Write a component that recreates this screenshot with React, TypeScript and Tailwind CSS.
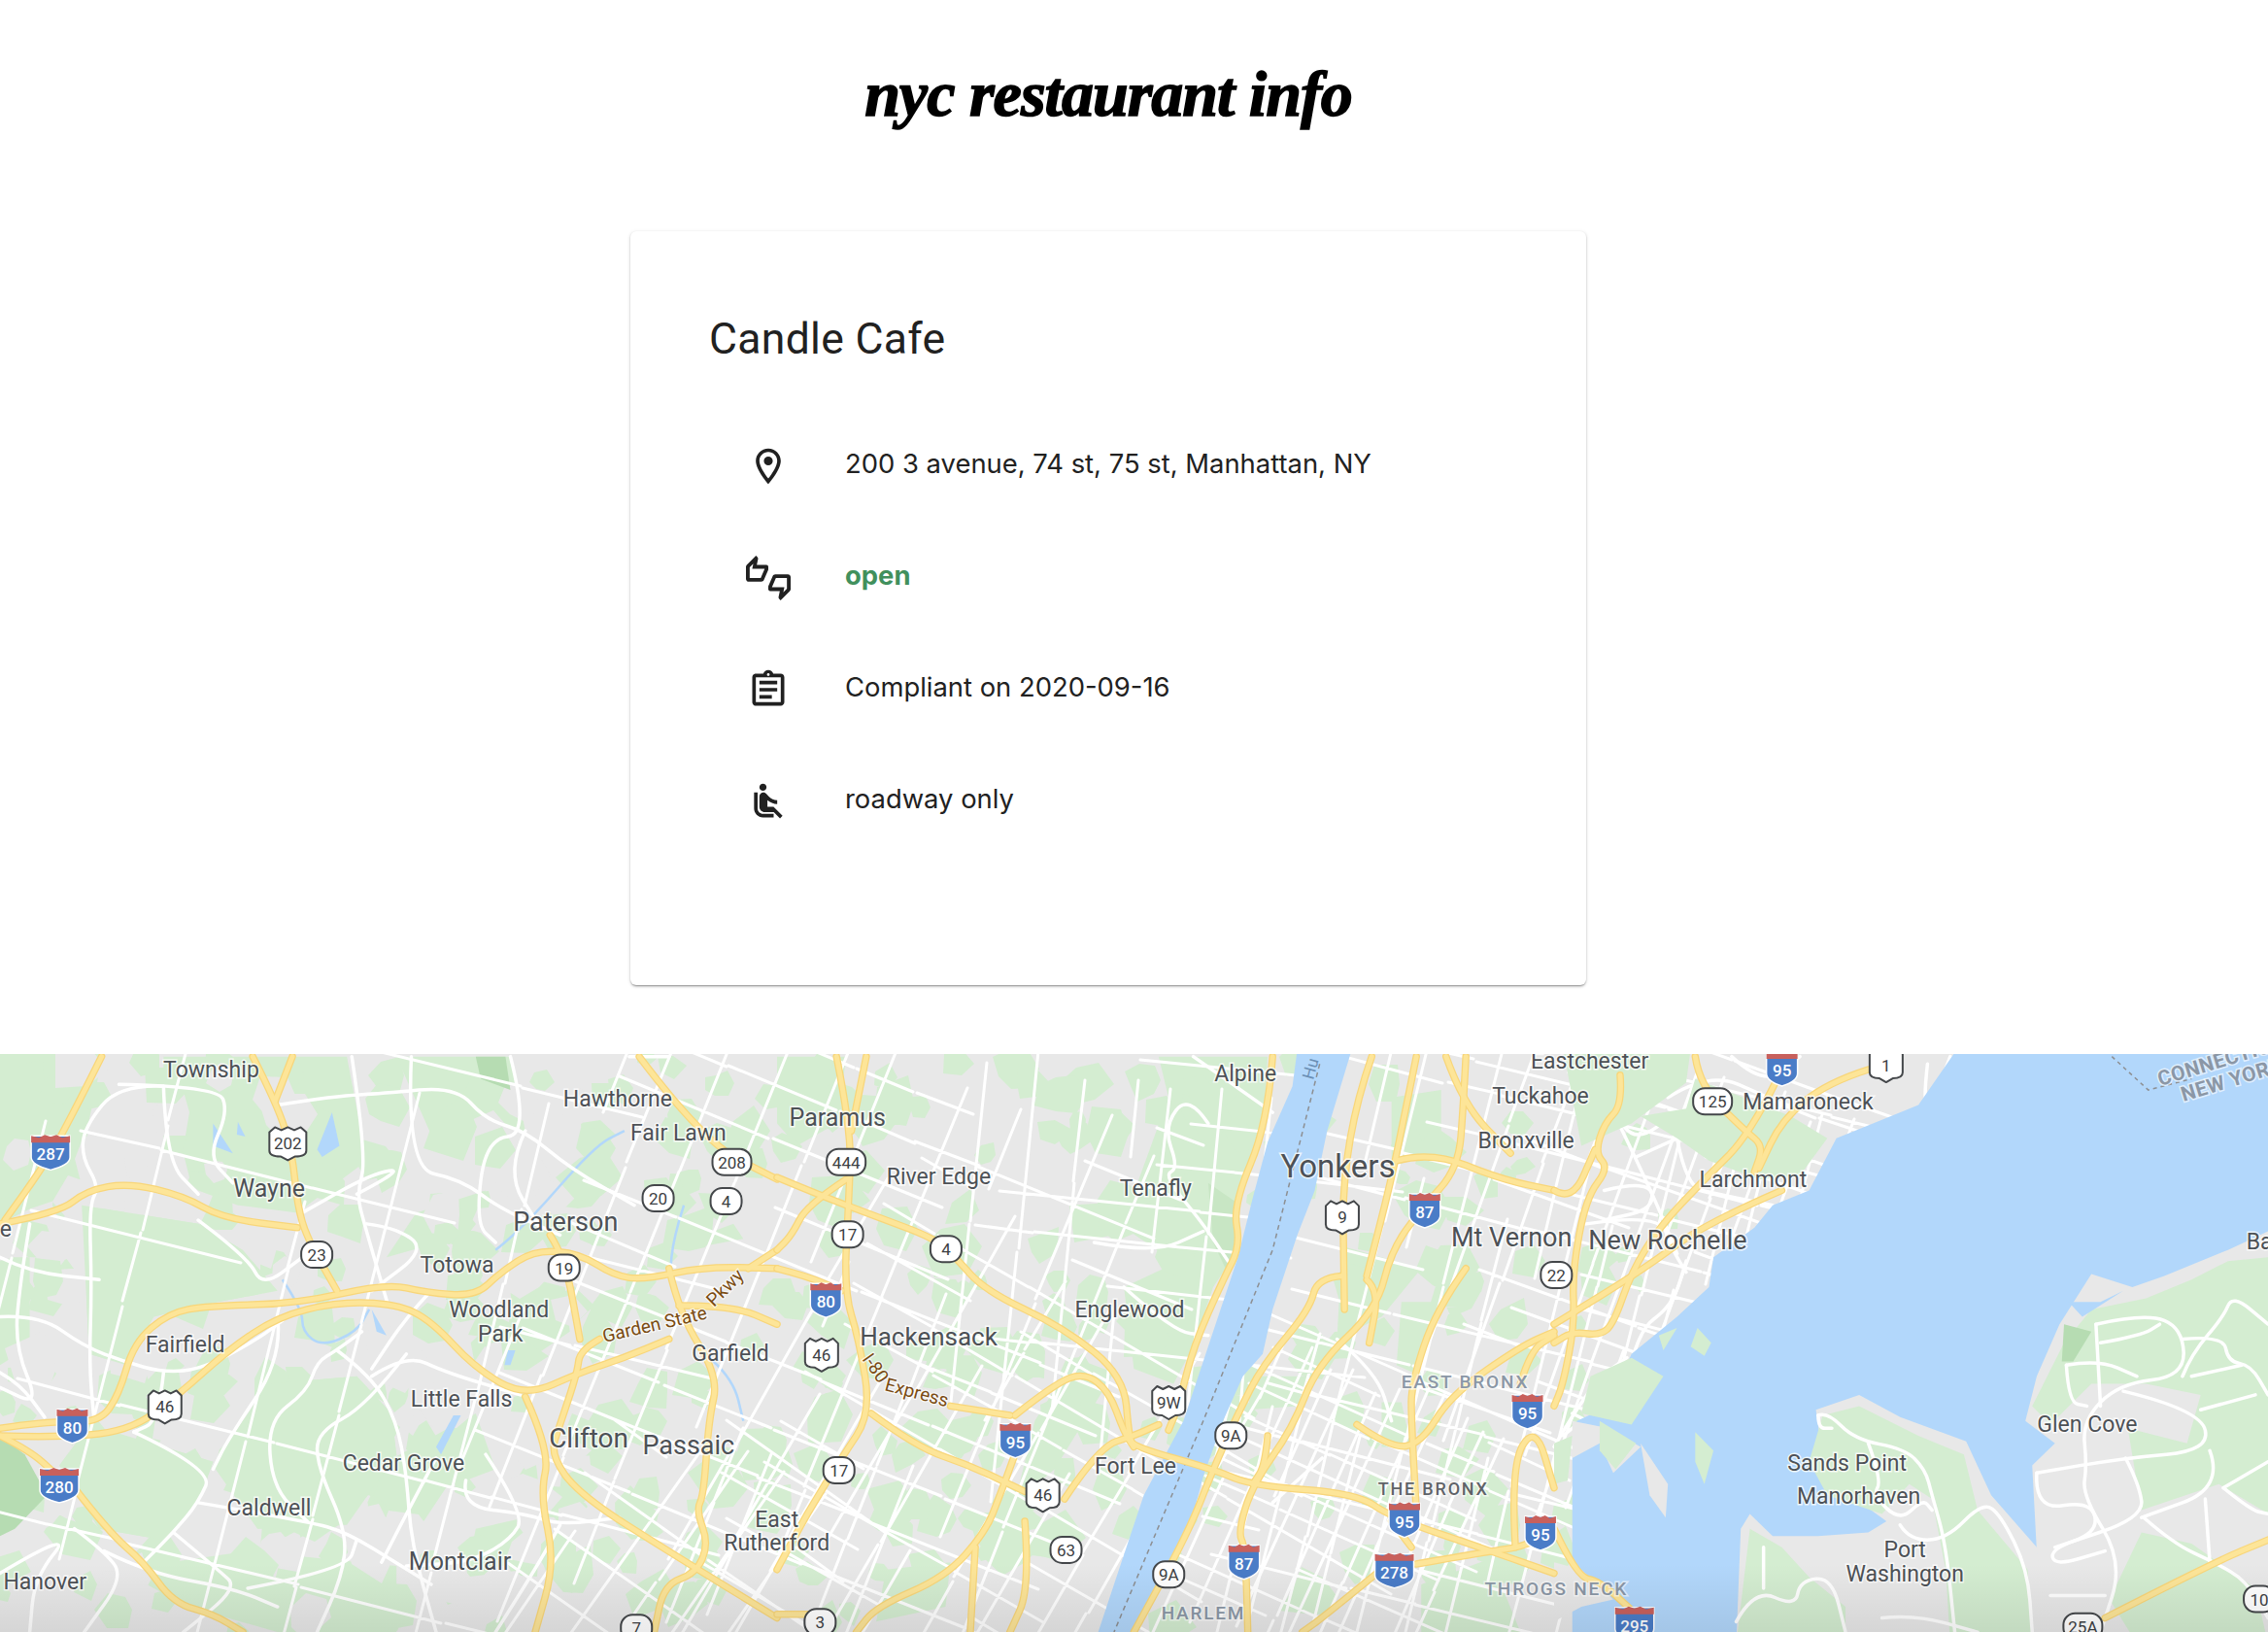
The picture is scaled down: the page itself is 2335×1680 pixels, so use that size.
import React from 'react'

// --- map drawing helpers ---
type Pts = string

const T1 = 'matrix(0.5102 0 0 0.3827 0 1080)'
const T2 = 'matrix(0.5102 0 0 0.3827 800 1080)'
const T3 = 'matrix(0.4688 0 0 0.3827 1600 1080)'

function smooth(p: Pts) {
  const a = p.trim().split(/\s+/).map((s) => s.split(',').map(Number))
  let d = `M${a[0][0]},${a[0][1]}`
  for (let i = 1; i < a.length - 1; i++) {
    const mx = (a[i][0] + a[i + 1][0]) / 2
    const my = (a[i][1] + a[i + 1][1]) / 2
    d += `Q${a[i][0]},${a[i][1]} ${mx},${my}`
  }
  const l = a[a.length - 1]
  return d + `L${l[0]},${l[1]}`
}

function lcg(seed: number) {
  let s = seed
  return () => {
    s = (s * 16807) % 2147483647
    return (s & 0xffff) / 0xffff
  }
}

function grid(x: number, y: number, w: number, h: number, deg: number, step: number, seed: number) {
  const rnd = lcg(seed)
  const rad = (deg * Math.PI) / 180
  const c = Math.cos(rad)
  const n = Math.sin(rad)
  const cx = x + w / 2
  const cy = y + h / 2
  const pt = (u: number, v: number) =>
    `${Math.round(cx + u * c - v * n)},${Math.round(cy + u * n + v * c)}`
  let d = ''
  const R = Math.max(w, h) / 2
  for (let u = -R; u <= R; u += step * (0.8 + rnd() * 0.7)) {
    let v = -R + rnd() * 40
    while (v < R) {
      const len = 60 + rnd() * 200
      if (rnd() > 0.2) d += `M${pt(u, v)}L${pt(u + rnd() * 4 - 2, v + len)}`
      v += len + rnd() * 6
    }
  }
  for (let v = -R; v <= R; v += step * (0.8 + rnd() * 0.9)) {
    let u = -R + rnd() * 40
    while (u < R) {
      const len = 50 + rnd() * 160
      if (rnd() > 0.22) d += `M${pt(u, v)}L${pt(u + len, v + rnd() * 4 - 2)}`
      u += len + rnd() * 6
    }
  }
  return d
}

// scattered irregular patches, the tree cover of the base map
function blotches(x: number, y: number, w: number, h: number, count: number, min: number, max: number, seed: number) {
  const rnd = lcg(seed)
  let d = ''
  for (let i = 0; i < count; i++) {
    const cx = x + rnd() * w
    const cy = y + rnd() * h
    const r = min + rnd() * (max - min)
    const sides = 5 + Math.floor(rnd() * 3)
    for (let k = 0; k < sides; k++) {
      const a = (k / sides) * Math.PI * 2
      const rr = r * (0.55 + rnd() * 0.6)
      d += `${k ? 'L' : 'M'}${Math.round(cx + Math.cos(a) * rr)},${Math.round(cy + Math.sin(a) * rr)}`
    }
    d += 'Z'
  }
  return d
}

const GREEN = '#d4edd1'
const GREEN2 = '#c8e6c4'
const GREEN3 = '#b6dcb2'
const LAND = '#e8e8e8'
const WATER = '#b2d7fb'

// traced in tile coordinates, see T1/T2/T3
const greens1: Pts[] = [
  '0,0 210,0 180,190 165,330 170,380 60,430 0,470',
  '330,20 700,20 740,300 600,440 480,420 400,380 330,300',
  '165,420 400,470 490,540 560,650 400,690 310,720 255,850 180,820',
  '0,560 60,560 60,800 0,850',
  '180,1010 430,1110 400,1220 330,1320 200,1290 120,1120',
  '540,900 720,880 790,980 800,1090 700,1280 520,1290 430,1120',
  '780,1110 960,980 1000,1130 900,1180 830,1320 720,1280',
  '240,1400 500,1350 800,1390 800,1568 560,1568 380,1500',
  '1080,620 1140,640 1150,760 1040,860 960,860 950,790',
  '800,20 1030,20 1060,220 950,200 880,260',
  '840,440 980,380 940,500 780,560',
  '1420,500 1480,470 1500,510 1420,530',
  '960,1290 1060,1260 1060,1400 940,1420',
]
const solid1: Pts[] = [
  '165,420 400,470 490,540 560,650 400,690 310,720 255,850 180,820',
  '180,1010 430,1110 400,1220 330,1320 200,1290 120,1120',
  '540,900 720,880 790,980 800,1090 700,1280 520,1290 430,1120',
]
const dark1: Pts[] = ['0,1040 50,1090 95,1200 30,1290 0,1310', '960,20 1020,20 1030,110 970,80']
const greens2: Pts[] = [
  '770,20 990,20 980,240 925,410 935,530 880,640 800,570 700,480 730,350 790,130',
  '700,640 860,540 880,640 840,800 800,900 720,860',
  '1140,530 1300,590 1220,720 1130,780',
  '1240,130 1340,110 1340,260 1240,320',
  '960,880 1070,880 1050,960 950,970',
  '0,20 140,20 120,200 40,260 0,200',
  '590,420 700,410 680,500 600,520',
  '520,1000 600,830 680,870 560,1130 480,1220',
  '1220,950 1260,950 1280,1070 1220,1070',
  '1260,680 1340,680 1300,880 1250,850',
  '220,1400 350,1380 340,1500 200,1540',
  '1300,1440 1440,1370 1500,1568 1300,1568',
]
const parks2: Pts[] = ['870,360 925,410 935,530 905,590 880,520']

const whites1: Pts[] = [
  '330,100 240,95 170,210 165,290 200,370 180,420 185,640 180,850 190,1000',
  '240,95 440,100 460,170 420,290 470,360',
  '330,100 335,300 400,390',
  '0,720 80,715 170,800 250,840 330,870 410,860 520,780 570,730',
  '60,470 40,630 30,800 80,960 0,910',
  '400,460 500,560 530,640 610,560',
  '560,150 680,125 770,120 920,100 980,190 1060,220 1150,320 1280,420',
  '710,20 740,290 720,390 735,470 790,720 770,630',
  '830,20 820,320 930,350 1010,430 1130,500',
  '740,470 800,480 860,540 750,650',
  '720,390 820,320 750,335 610,440',
  '1030,20 1070,230 980,240 960,470 1000,520',
  '270,1030 430,1130 400,1220 350,1300 290,1380',
  '400,1220 620,1270 700,1300 810,1390 870,1440',
  '560,720 570,830 460,1050 430,1130',
  '730,760 680,810 640,840 620,920 540,1000 550,1180 620,1270',
  '680,810 750,880 800,1000 820,1140 830,1330 880,1568',
  '750,880 820,820 900,870 1050,930',
  '820,820 740,960 640,1030 640,1120 700,1300 690,1420 640,1568',
  '980,1090 1060,1250 1030,1320 950,1380 820,1390',
  '940,1160 930,1230 1060,1250 1130,1280 1250,1260',
  '150,1290 210,1350 250,1420 170,1568',
  '0,1410 150,1290 70,1420 60,1568',
  '210,1350 300,1410 470,1450 560,1500',
  '350,1300 440,1400 480,1450 370,1568',
  '1270,20 1350,20',
  '1000,1568 1080,1400 1130,1280',
  '880,1100 820,1250 770,1380',
  '0,870 40,900 90,990',
  '500,1450 700,1400 720,1320',
  '0,560 60,600 200,620',
  '330,870 320,1000 270,1030',
  '1060,220 1020,330 1090,480',
  '870,650 820,720 750,860',
]
const whites2: Pts[] = [
  '840,20 1000,170',
  '870,200 830,120 780,210 810,320 780,340 860,470 910,570',
  '640,520 760,550 860,490',
  '700,640 800,760 870,770',
  '1130,780 1210,870 1240,1000',
  '1000,1220 1100,1100',
]
const whites3: Pts[] = [
  '270,240 290,370 360,390 480,420',
  '340,200 370,300 310,370',
  '130,170 210,370 270,550',
  '110,380 210,350 220,430 110,460',
  '70,470 230,440 260,540 290,600',
  '160,900 180,760 260,690 290,570',
  '40,980 170,1060 190,1080 250,1250',
  '0,1070 80,900 160,830',
  '250,130 340,60 470,130',
  '370,110 270,170 180,250 130,170',
  '20,1040 60,1000',
  '270,240 180,290',
  '820,40 810,150 830,150 870,20',
  '390,20 460,100 540,20',
]
const whitesIsle: Pts[] = [
  '580,985 600,975 660,1050 770,1075 815,1130 830,1200 860,1330 880,1568',
  '580,985 580,1020 610,1020',
  '690,1060 720,1160 700,1200 760,1270 810,1210 830,1240',
  '760,1280 780,1320 860,1320 940,1220 980,1250 1040,1400 1050,1568',
  '400,1540 440,1450 530,1500 540,1430 610,1420 640,1568',
  '460,1340 460,1450',
  '720,1530 790,1520 930,1568',
  '1190,740 1300,710 1380,750 1385,880 1240,900 1160,1000 1170,1120 1160,1200 1250,1380 1200,1568',
  '1190,740 1200,960',
  '1200,790 1290,770 1330,740',
  '1125,850 1195,835 1280,880',
  '1125,850 1130,950 1170,960',
  '1380,880 1400,820 1470,720 1490,660 1568,740',
  '1380,780 1470,770 1480,840 1530,850 1568,930',
  '1400,880 1510,850',
  '1250,920 1420,970 1440,1080 1250,1100 1060,1140',
  '1420,970 1540,930',
  '1255,1100 1285,1170 1295,1260 1100,1340',
  '1060,1140 1055,1240 1180,1215 1195,1300 1090,1345 1100,1390 1210,1350',
  '1295,1260 1360,1330 1450,1380 1520,1430 1568,1530',
  '1440,1080 1470,1180 1290,1260',
  '1470,1180 1568,1110',
  '1430,1210 1440,1380',
  '1090,1470 1210,1470',
  '1470,1180 1530,1240 1568,1250',
]

const hw1: Pts[] = [
  '205,20 130,220 80,330 10,460',
  '0,470 120,440 175,380 260,360 370,395 450,455 600,480',
  '510,20 560,150 590,280 600,420 620,510 680,650',
  '590,20 555,140',
  '0,1020 100,1000 200,1005 240,930 270,790 340,710 420,690 600,685 780,630 860,655 960,665 1010,600 1080,540 1170,550 1240,610 1300,620 1420,585 1568,590',
  '0,1040 100,1045 260,1030 360,930 460,810 560,720 680,680 800,685 870,730 960,860 1060,935 1170,870 1260,830 1350,780',
  '1060,935 1110,1080 1090,1200 1120,1380 1080,1568',
  '1210,780 1170,810 1165,870 1130,1010 1110,1090 1170,1200 1360,1360 1568,1530',
  '1110,500 1140,560 1170,780',
  '0,1040 60,1080 110,1140',
  '150,1180 220,1300 290,1380 350,1490 430,1520 490,1568',
  '1350,590 1370,710 1450,880 1430,1000 1420,1200 1405,1240 1430,1330 1405,1410 1340,1440 1320,1568',
  '1370,690 1480,690 1568,740',
  '1290,20 1420,250 1568,350',
  '1510,590 1568,540',
]
const hw2: Pts[] = [
  '120,20 150,220 145,400 135,650 165,780 190,980 130,1100 60,1250 0,1400',
  '180,20 150,220',
  '0,345 90,395 200,450 320,510 360,560 420,650 580,750 700,880 710,1040 720,1070 880,1130 960,1175 1170,1195 1240,1260 1440,1350 1568,1410',
  '140,350 60,420 30,500 0,540',
  '0,590 60,610 130,650',
  '190,980 280,1070 390,1120 500,1190',
  '350,960 470,985',
  '480,985 560,900 620,870 670,920 700,1030 720,1070',
  '480,1090 450,1200 420,1300 340,1420 200,1500 160,1568',
  '400,1340 390,1568',
  '500,1270 510,1450 470,1568',
  '580,1210 650,1070 720,1040 770,1010',
  '0,1520 70,1520',
  '1000,20 990,200 920,420 935,530 900,620 840,800 810,960 790,1025',
  '1200,20 1140,250 1145,700',
  '1290,20 1270,150 1240,350 1190,610',
  '1250,300 1320,275 1460,350 1568,380',
  '1390,20 1385,150 1375,320 1300,430 1240,540 1210,700 1090,850 1040,1020 960,1170 930,1300 945,1340 950,1568',
  '1140,610 1090,615 1075,700 980,850 930,980 880,1130 830,1300 720,1568',
  '1190,620 1215,650 1195,790',
  '1350,20 1385,150 1480,280',
  '1390,590 1330,700 1280,900 1280,1000 1290,1240',
  '1170,1010 1240,1075 1300,1060 1360,930 1500,800 1568,760',
  '1240,1270 1280,1340',
  '1210,1410 1100,1530 1060,1568',
  '1290,1385 1440,1350 1500,1340 1568,1300',
  '1490,1340 1480,1120 1530,1010 1568,1180',
  '990,1040 985,1120 960,1170',
  '1500,900 1520,810 1568,770',
]
const hw3: Pts[] = [
  '310,20 320,100 420,220 460,260 440,330',
  '145,70 150,150 110,200 90,280 120,320 70,400 40,600 45,740 20,900 0,960',
  '490,80 430,230 330,350 230,480 170,600 130,740 100,770 40,760 0,790',
  '690,55 600,90 500,190 450,320',
  '500,380 330,470 200,590 0,740',
  '0,380 40,410 90,270',
  '0,1290 50,1420 100,1430 180,1520',
  '1210,1530 1450,1380 1568,1320',
]

type Lb = [string, number, number, number?, string?]
// [text, x, y] on the shrunk scale of the reference, sized by the 4th value
const labels: Lb[] = [
  ['Township', 146, 739], ['Hawthorne', 427, 759], ['Fair Lawn', 469, 783], ['Paramus', 579, 772, 25],
  ['Alpine', 861, 742], ['Eastchester', 1099, 733], ['Tuckahoe', 1065, 757], ['Mamaroneck', 1250, 761],
  ['Bronxville', 1055, 788], ['Wayne', 186, 821, 25], ['River Edge', 649, 813], ['Tenafly', 799, 821],
  ['Yonkers', 925, 806, 33], ['Larchmont', 1212, 815], ['Paterson', 391, 844, 27], ['Mt Vernon', 1045, 855, 27],
  ['New Rochelle', 1153, 857, 27], ['Totowa', 316, 874], ['Woodland', 345, 905], ['Park', 346, 922],
  ['Englewood', 781, 905], ['Fairfield', 128, 929], ['Garfield', 505, 935], ['Hackensack', 642, 924, 26],
  ['Little Falls', 319, 967], ['Glen Cove', 1443, 984], ['Clifton', 407, 994, 28], ['Passaic', 476, 999, 27],
  ['Sands Point', 1277, 1011], ['Fort Lee', 785, 1013], ['Cedar Grove', 279, 1011], ['Manorhaven', 1285, 1034],
  ['Caldwell', 186, 1042], ['East', 537, 1050], ['Rutherford', 537, 1066], ['Port', 1317, 1071],
  ['Washington', 1317, 1088], ['Montclair', 318, 1079, 25], ['Hanover', 31, 1093], ['e', 4, 849], ['Ba', 1562, 858],
]
const areas: [string, number, number, number?, string?][] = [
  ['EAST BRONX', 1013, 955, 19, '#8b97a6'],
  ['THE BRONX', 991, 1029, 18, '#5f6368'],
  ['THROGS NECK', 1076, 1098, 19, '#8b97a6'],
  ['HARLEM', 832, 1115, 19, '#8b97a6'],
]

type Sh = ['i' | 'us' | 'st', string, number, number]
const shields: Sh[] = [
  ['i', '287', 35, 796], ['us', '202', 199, 790], ['st', '208', 506, 803], ['st', '444', 585, 803],
  ['st', '20', 455, 828], ['st', '4', 502, 830], ['st', '23', 219, 867], ['st', '19', 390, 876],
  ['st', '17', 586, 853], ['st', '4', 654, 863], ['i', '80', 571, 898], ['us', '46', 568, 936],
  ['us', '46', 114, 972], ['i', '80', 50, 985], ['i', '280', 41, 1026], ['i', '95', 702, 995],
  ['us', '46', 721, 1033], ['st', '17', 580, 1016], ['st', '63', 737, 1071], ['st', '3', 567, 1121],
  ['st', '7', 440, 1125], ['us', '9W', 808, 969], ['st', '9A', 851, 992], ['st', '9A', 808, 1088],
  ['i', '87', 860, 1079], ['i', '95', 971, 1050], ['i', '278', 964, 1085], ['i', '95', 1065, 1059],
  ['i', '95', 1056, 975], ['i', '87', 985, 836], ['us', '9', 928, 841], ['st', '22', 1076, 881],
  ['st', '125', 1184, 761], ['i', '95', 1232, 738], ['us', '1', 1304, 736], ['i', '295', 1130, 1122],
  ['st', '25A', 1440, 1124], ['st', '10', 1562, 1105],
]

const S = 2335 / 1568

function Shield({ kind, text, x, y }: { kind: Sh[0]; text: string; x: number; y: number }) {
  const px = x * S
  const py = y * S
  if (kind === 'i') {
    const w = text.length > 2 ? 20 : 16
    return (
      <g transform={`translate(${px} ${py})`}>
        <path
          d={`M${-w} -16 L${-w} 6 Q${-w} 14 0 19 Q${w} 14 ${w} 6 L${w} -16Z`}
          fill="#4a7cc7"
          stroke="#fff"
          strokeWidth="1.5"
        />
        <path
          d={`M${-w} -9 L${w} -9 L${w} -16 L${w * 0.6} -14 L${w * 0.3} -17 L0 -15 L${-w * 0.3} -17 L${-w * 0.6} -14 L${-w} -16Z`}
          fill="#c8605c"
        />
        <text y="9" textAnchor="middle" fontSize="17" fontWeight="500" fill="#fff">
          {text}
        </text>
      </g>
    )
  }
  if (kind === 'us') {
    const w = text.length > 2 ? 19 : 17
    return (
      <g transform={`translate(${px} ${py})`}>
        <path
          d={`M${-w} -11 L${-w * 0.7} -16 L${-w * 0.35} -13 L0 -16 L${w * 0.35} -13 L${w * 0.7} -16 L${w} -11 L${w} 8 Q${w} 14 ${w * 0.4} 14 L0 18 L${-w * 0.4} 14 Q${-w} 14 ${-w} 8Z`}
          fill="#fff"
          stroke="#44474a"
          strokeWidth="2"
          strokeLinejoin="round"
        />
        <text y="7" textAnchor="middle" fontSize="17" fill="#3c4043">
          {text}
        </text>
      </g>
    )
  }
  const w = text.length > 2 ? 40 : 32
  return (
    <g transform={`translate(${px} ${py})`}>
      <rect x={-w / 2} y="-13" width={w} height="27" rx="12" fill="#fff" stroke="#44474a" strokeWidth="2" />
      <text y="7" textAnchor="middle" fontSize="17" fill="#3c4043">
        {text}
      </text>
    </g>
  )
}

function Lines({ list, stroke, width, t }: { list: Pts[]; stroke: string; width: number; t: string }) {
  return (
    <g transform={t} fill="none" stroke={stroke} strokeWidth={width} strokeLinecap="round" strokeLinejoin="round">
      {list.map((p, i) => (
        <path key={i} d={smooth(p)} vectorEffect="non-scaling-stroke" />
      ))}
    </g>
  )
}

function Fills({ list, fill, t }: { list: Pts[]; fill: string; t: string }) {
  return (
    <g transform={t} fill={fill}>
      {list.map((p, i) => (
        <polygon key={i} points={p} />
      ))}
    </g>
  )
}

function MapLabel({ text, x, y, size = 23, color = '#4d5156' }: { text: string; x: number; y: number; size?: number; color?: string }) {
  return (
    <text
      x={x * S}
      y={y * S + size * 0.36}
      textAnchor="middle"
      fontSize={size}
      fill={color}
      stroke="#fff"
      strokeWidth="3"
      strokeOpacity="0.75"
      paintOrder="stroke"
    >
      {text}
    </text>
  )
}

function MapView() {
  const gridD = [
    grid(0, 1085, 620, 595, 14, 105, 101),
    grid(570, 1085, 560, 480, 22, 40, 11),
    grid(780, 1330, 480, 360, 30, 38, 23),
    grid(1020, 1090, 280, 320, 6, 42, 37),
    grid(1220, 1400, 300, 290, 24, 22, 41),
    grid(1420, 1085, 340, 600, 14, 32, 53),
    grid(1640, 1085, 180, 430, 20, 32, 71),
    grid(560, 1480, 260, 200, 35, 42, 89),
  ].join('')
  return (
    <div className="relative h-[595px] w-full overflow-hidden">
      <svg viewBox="0 1085 2335 595" className="block h-[595px] w-full [font-family:Roboto,sans-serif]">
        <rect x="0" y="1085" width="2335" height="595" fill={LAND} />
        <Fills list={greens1} fill={GREEN} t={T1} />
        <Fills list={greens2} fill={GREEN} t={T2} />
        <Fills list={parks2} fill={GREEN2} t={T2} />
        <path d={blotches(0, 1085, 1750, 595, 340, 10, 30, 7)} fill={GREEN} />
        <path d={blotches(0, 1085, 620, 595, 90, 14, 36, 19)} fill={LAND} />
        <path d={blotches(0, 1085, 1200, 595, 70, 14, 34, 31)} fill={GREEN} />
        <Fills list={solid1} fill={GREEN} t={T1} />
        <Fills list={dark1} fill={GREEN3} t={T1} />
        {/* small reservoirs and rivers west of the Hudson */}
        <g transform={T1} fill={WATER}>
          <polygon points="430,200 470,280 430,260" />
          <polygon points="670,170 685,260 650,290 640,270" />
          <polygon points="480,195 495,235 478,230" />
          <polygon points="915,985 930,985 890,1090 880,1070" />
          <polygon points="750,700 780,770 760,760" />
          <polygon points="1025,810 1040,810 1030,850 1018,850" />
        </g>
        <g transform={T1} fill="none" stroke={WATER} strokeWidth="2.5">
          <path vectorEffect="non-scaling-stroke" d={smooth('570,620 610,700 610,760 650,800 720,760 745,700')} />
          <path vectorEffect="non-scaling-stroke" d={smooth('1000,540 1050,490 1200,260 1260,220')} />
          <path vectorEffect="non-scaling-stroke" d={smooth('1380,420 1360,500 1350,620 1400,790 1480,890 1500,1000')} />
        </g>
        <g fill="none" stroke="#fff" strokeWidth="3" strokeLinecap="round">
          <path d={gridD} />
        </g>
        <Lines list={whites1} stroke="#fff" width={3.5} t={T1} />
        <Lines list={whites2} stroke="#fff" width={3.5} t={T2} />
        <Lines list={whites3} stroke="#fff" width={3.5} t={T3} />

        {/* Hudson */}
        <polygon
          transform={T2}
          fill={WATER}
          points="1050,0 1160,0 1110,220 1085,380 1050,500 1000,700 980,820 940,880 900,1000 860,1150 830,1300 770,1460 700,1600 640,1600 680,1440 740,1200 820,1000 880,760 930,560 960,400 990,250 1040,100"
        />
        {/* Long Island Sound */}
        <polygon
          transform={T3}
          fill={WATER}
          points="885,0 1568,0 1568,1600 40,1600 40,1100 50,1000 120,960 170,820 270,720 340,640 350,560 440,480 480,420 560,380 620,240 720,190 800,150"
        />
        <g transform={T3} fill={LAND}>
          <polygon points="575,970 670,930 760,990 905,1055 960,1200 1060,1340 1090,1600 400,1600 410,1290 430,1250 480,1310 580,1310 690,1300 730,1270 640,1190 590,1100" />
          <polygon points="1035,1000 1060,880 1110,740 1180,605 1270,640 1340,610 1480,540 1568,490 1568,1600 1085,1600 1060,1350 1050,1120 1100,1060" />
          <polygon points="190,1060 250,1170 245,1260 210,1200" />
          <polygon points="40,1000 120,1020 190,1070 130,1140 100,1060 40,1100" />
          <polygon points="0,1380 60,1400 130,1480 60,1500 0,1540" />
        </g>
        <g transform={T3} fill={GREEN}>
          <polygon points="590,985 670,960 800,1040 900,1090 930,1240 1040,1400 1050,1600 870,1600 860,1400 830,1210 780,1170 720,1250 600,1200 560,1110" />
          <polygon points="430,1290 500,1340 560,1420 640,1500 640,1600 400,1600" />
          <polygon points="1120,790 1180,700 1300,670 1400,620 1480,570 1568,560 1568,1250 1460,1170 1290,1240 1260,1020 1390,1060 1420,930 1300,900 1180,900 1090,1010 1050,960" />
          <polygon points="1290,1300 1400,1330 1540,1450 1568,1600 1280,1600 1220,1480" />
          <polygon points="310,1030 350,1080 330,1170 310,1110" />
          <polygon points="315,750 345,790 330,825 300,800" />
          <polygon points="100,1000 180,1060 135,1130 100,1080" />
          <polygon points="80,880 170,830 240,880 170,1010 60,980" />
          <polygon points="0,1060 40,1040 30,1160 0,1170" />
          <polygon points="190,180 290,160 310,80 520,180 600,240 540,340 450,350 340,300 270,240" />
          <polygon points="20,0 300,0 290,90 170,200 60,260" />
          <polygon points="230,770 270,750 240,810" />
        </g>
        <polygon transform={T3} fill={GREEN3} points="1120,740 1180,760 1140,840 1115,840" />
        <polygon transform={T3} fill={WATER} points="1130,680 1160,720 1250,650 1200,680" />
        <Lines list={whitesIsle} stroke="#fff" width={3.5} t={T3} />

        {/* State line through the rivers */}
        <path
          transform={T2}
          vectorEffect="non-scaling-stroke"
          d="M1095,40 L1000,540 L860,1000 L680,1568"
          fill="none"
          stroke="#8d8f92"
          strokeWidth="1.5"
          strokeDasharray="5 4"
        />
        <path
          transform={T3}
          vectorEffect="non-scaling-stroke"
          d="M1225,20 L1305,110 L1400,80"
          fill="none"
          stroke="#8d8f92"
          strokeWidth="1.5"
          strokeDasharray="4 4"
        />

        {[
          [hw1, T1],
          [hw2, T2],
          [hw3, T3],
        ].map(([list, t], i) => (
          <g key={i}>
            <Lines list={list as Pts[]} stroke="#f8d67a" width={7.5} t={t as string} />
            <Lines list={list as Pts[]} stroke="#fde598" width={5} t={t as string} />
          </g>
        ))}

        {labels.map(([t, x, y, size], i) => (
          <MapLabel key={i} text={t} x={x} y={y} size={size} />
        ))}
        {areas.map(([t, x, y, size, c], i) => (
          <text
            key={t + i}
            x={x * S}
            y={y * S + 7}
            textAnchor="middle"
            fontSize={size}
            fontWeight="500"
            letterSpacing="1.8"
            fill={c}
            stroke="#fff"
            strokeWidth="3"
            strokeOpacity="0.6"
            paintOrder="stroke"
          >
            {t}
          </text>
        ))}

        <g fill="#7a4b12" stroke="#fff" strokeWidth="2.5" strokeOpacity="0.7" fontSize="19">
          <text transform="translate(622 1382) rotate(-13)" paintOrder="stroke">
            Garden State
          </text>
          <text transform="translate(735 1346) rotate(-45)" paintOrder="stroke">
            Pkwy
          </text>
          <text transform="translate(887 1399) rotate(55)" paintOrder="stroke">
            I-80
          </text>
          <text transform="translate(910 1431) rotate(15)" paintOrder="stroke">
            Express
          </text>
        </g>
        <text transform="translate(1352 1112) rotate(-75)" fontSize="17" fill="#6b8fb5">
          Hu
        </text>
        <g fontSize="21" fontWeight="700" fill="#8b97a6" stroke="#fff" strokeWidth="3" strokeOpacity="0.6" letterSpacing="0.5">
          <text transform="translate(2224 1118) rotate(-17)" paintOrder="stroke">
            CONNECTICUT
          </text>
          <text transform="translate(2248 1134) rotate(-17)" paintOrder="stroke">
            NEW YORK
          </text>
        </g>

        {shields.map(([k, t, x, y], i) => (
          <Shield key={i} kind={k} text={t} x={x} y={y} />
        ))}
      </svg>
      <div className="absolute inset-x-0 bottom-0 h-[70px] bg-gradient-to-b from-transparent to-black/8" />
    </div>
  )
}

// --- card icons ---
function Icon({ d, size = 44 }: { d: string; size?: number }) {
  return (
    <svg viewBox="0 0 24 24" width={size} height={size} fill="#212121">
      <path d={d} />
    </svg>
  )
}

const PIN =
  'M12 2C8.13 2 5 5.13 5 9c0 5.25 7 13 7 13s7-7.75 7-13c0-3.87-3.13-7-7-7zM7 9c0-2.76 2.24-5 5-5s5 2.24 5 5c0 2.88-2.88 7.19-5 9.88C9.92 16.21 7 11.85 7 9zM12 6.5a2.5 2.5 0 1 0 0 5 2.5 2.5 0 0 0 0-5z'
const THUMBS =
  'M12 6c0-.55-.45-1-1-1H5.82l.66-3.18.02-.23c0-.31-.13-.59-.33-.8L5.38 0 .44 4.94C.17 5.21 0 5.59 0 6v6.5c0 .83.67 1.5 1.5 1.5h6.75c.62 0 1.15-.38 1.38-.91l2.26-5.29c.07-.17.11-.36.11-.55V6zm-2 1.13L7.92 12H2V6.21l1.93-1.93L3.36 7H10v.13zM22.5 10h-6.75c-.62 0-1.15.38-1.38.91l-2.26 5.29c-.07.17-.11.36-.11.55V18c0 .55.45 1 1 1h5.18l-.66 3.18-.02.24c0 .31.13.59.33.8l.79.78 4.94-4.94c.27-.27.44-.65.44-1.06v-6.5c0-.83-.67-1.5-1.5-1.5zm-.5 7.79l-1.93 1.93.57-2.72H14v-.13L16.08 12H22v5.79z'
const CLIPBOARD =
  'M7 15h7v2H7zm0-4h10v2H7zm0-4h10v2H7zm12-4h-4.18C14.4 1.84 13.3 1 12 1c-1.3 0-2.4.84-2.82 2H5c-.14 0-.27.01-.4.04-.39.08-.74.28-1.01.55-.18.18-.33.4-.43.64-.1.23-.16.49-.16.77v14c0 .27.06.54.16.78s.25.45.43.64c.27.27.62.47 1.01.55.13.02.26.03.4.03h14c1.1 0 2-.9 2-2V5c0-1.1-.9-2-2-2zm-7-.25c.41 0 .75.34.75.75s-.34.75-.75.75-.75-.34-.75-.75.34-.75.75-.75zM19 19H5V5h14v14z'
const SEAT =
  'M7.59 5.41c-.78-.78-.78-2.05 0-2.83.78-.78 2.05-.78 2.83 0 .78.78.78 2.05 0 2.83-.79.79-2.05.79-2.83 0zM6 16V7H4v9c0 2.76 2.24 5 5 5h6v-2H9c-1.66 0-3-1.34-3-3zm14 4.07L14.93 15H11.5v-3.68c1.4 1.15 3.6 2.16 5.5 2.16v-2.16c-1.66.02-3.61-.87-4.67-2.04l-1.4-1.55c-.19-.21-.43-.38-.69-.5-.29-.14-.62-.23-.96-.23h-.03C8.01 7 7 8.01 7 9.25V15c0 1.66 1.34 3 3 3h5.07l3.5 3.5L20 20.07z'

function Row({ icon, size, children }: { icon: string; size?: number; children: React.ReactNode }) {
  return (
    <li className="flex h-[115px] items-center">
      <div className="flex w-[148px] justify-center pr-[10px]">
        <Icon d={icon} size={size} />
      </div>
      <div className="pb-[6px] text-[27.4px] leading-[40px] text-[#212121] [font-family:Inter,sans-serif]">{children}</div>
    </li>
  )
}

export default function App() {
  return (
    <div className="h-[1680px] w-full overflow-hidden bg-white [font-family:Roboto,sans-serif]">
      {/* page content sits left of the window centre, the map does not */}
      <div className="mr-[53px]">
        <header className="flex h-[238px] items-start justify-center pt-[47px]">
          <h1 className="text-[66px] font-bold italic leading-[100px] tracking-[-1px] text-black [-webkit-text-stroke:1.5px_black] [font-family:'Liberation_Serif',serif]">
            nyc restaurant info
          </h1>
        </header>

        <section className="mx-auto h-[776px] w-[984px] rounded-[6px] bg-white shadow-[0_3px_3px_-2px_rgba(0,0,0,0.25),0_1px_4px_0_rgba(0,0,0,0.12),0_1px_2px_0_rgba(0,0,0,0.2)]">
          <h2 className="pl-[81px] pt-[79px] text-[44.5px] leading-[64px] tracking-[0.3px] text-[#212121]">Candle Cafe</h2>
          <ul className="pl-[73px] pt-[41px]">
            <Row icon={PIN}>200 3 avenue, 74 st, 75 st, Manhattan, NY</Row>
            <Row icon={THUMBS} size={46}>
              <span className="font-bold text-[#41905d]">open</span>
            </Row>
            <Row icon={CLIPBOARD}>Compliant on 2020-09-16</Row>
            <Row icon={SEAT}>roadway only</Row>
          </ul>
        </section>
      </div>

      <div className="mt-[71px]">
        <MapView />
      </div>
    </div>
  )
}
